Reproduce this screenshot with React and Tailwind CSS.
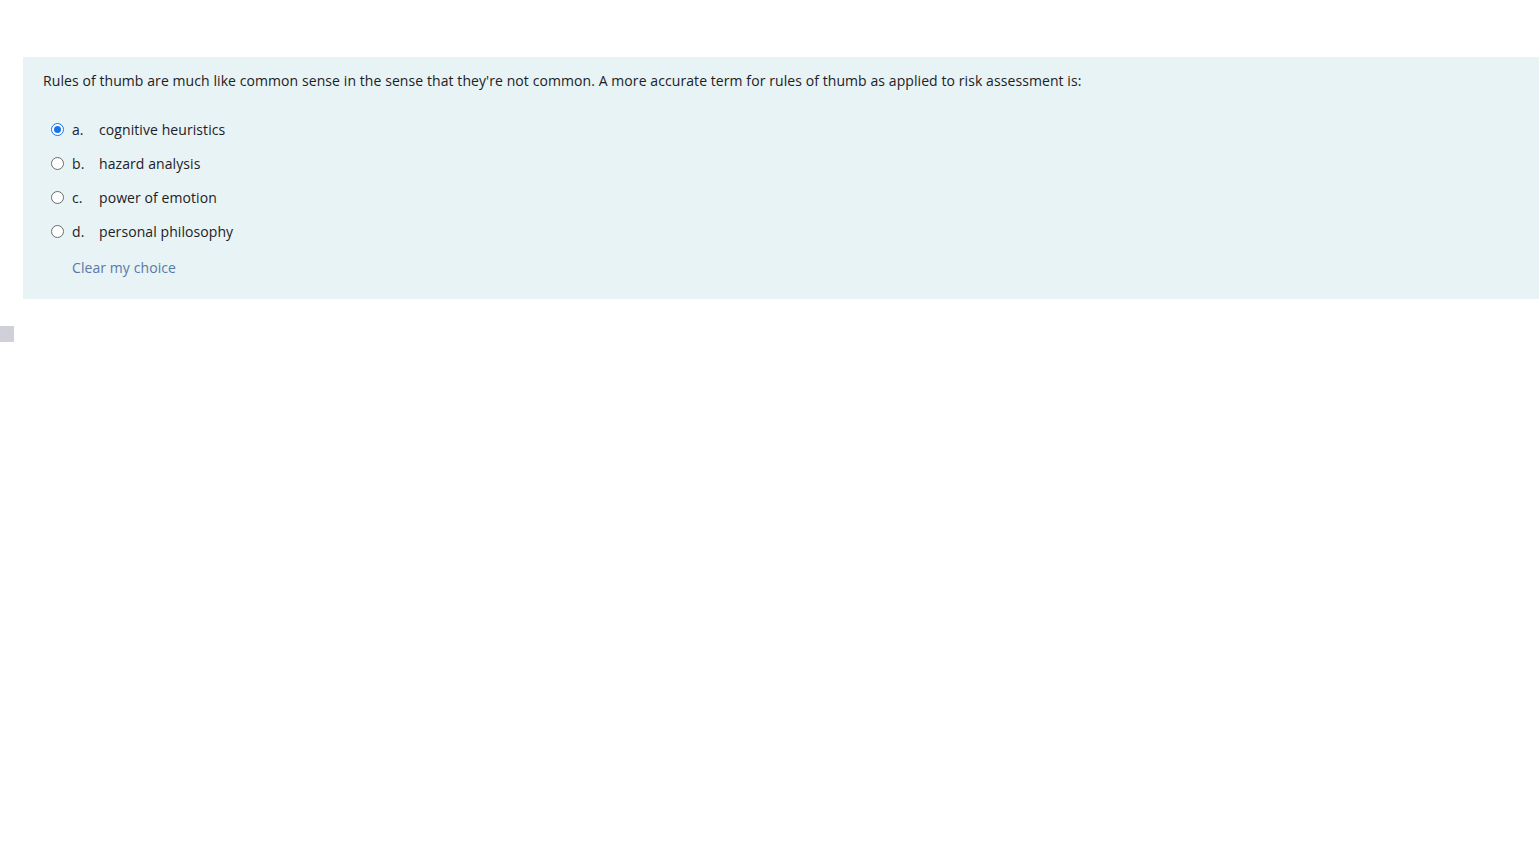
export default function App() {
  const opts = [
    ["a.", "cognitive heuristics", true],
    ["b.", "hazard analysis", false],
    ["c.", "power of emotion", false],
    ["d.", "personal philosophy", false],
  ];
  return (
    <div className="min-h-[864px] bg-white text-[#1d2125]" style={{ fontFamily: '"Open Sans", "Noto Sans", sans-serif' }}>
      <div className="h-[57px]" />
      <div className="ml-[23px] bg-[#e7f3f5] pl-[20px] pt-[13px] pb-[20px] h-[242px]">
        <p className="text-[14px] leading-[22px] tracking-[0.08px]">
          Rules of thumb are much like common sense in the sense that they're not common. A more accurate term for rules of thumb as applied to risk assessment is:
        </p>
        <div className="mt-[20px] flex flex-col">
          {opts.map(([l, t, c]) => (
            <div key={l} className="flex items-center h-[34px] pl-[8px] text-[14px] tracking-[0.08px]">
              <span className={"w-[13px] h-[13px] rounded-full flex items-center justify-center " + (c ? "border-[1.5px] border-[#1a73e8] bg-white" : "border border-[#6b6b6b] bg-white")}>
                {c && <span className="w-[7px] h-[7px] rounded-full bg-[#1a73e8]" />}
              </span>
              <span className="ml-[8px] w-[27px]">{l}</span>
              <span>{t}</span>
            </div>
          ))}
        </div>
        <div className="mt-[9px] pl-[29px] text-[14px] text-[#5a78a6] tracking-[0.08px]">Clear my choice</div>
      </div>
      <div className="mt-[27px] w-[14px] h-[16px] bg-[#cfd0d8]" />
    </div>
  );
}
